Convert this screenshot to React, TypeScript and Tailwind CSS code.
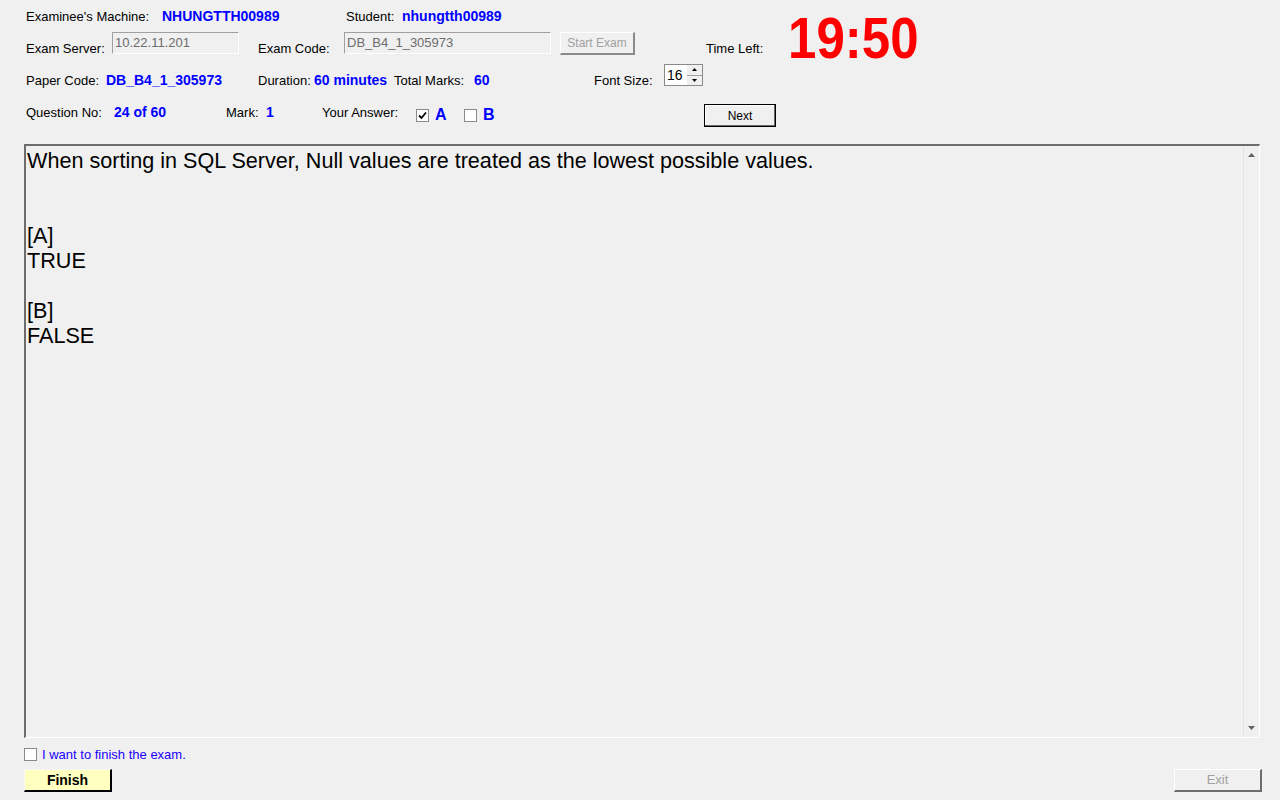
import React from "react";

function Label({ children, w }: { children: React.ReactNode; w?: string }) {
  return <div className={`text-[13px] leading-[15px] text-black whitespace-nowrap ${w ?? ""}`}>{children}</div>;
}

function Value({ children, w }: { children: React.ReactNode; w?: string }) {
  return (
    <div className={`text-[14px] leading-[16px] font-bold text-[#0000ff] whitespace-nowrap ${w ?? ""}`}>{children}</div>
  );
}

function CheckBox({ checked }: { checked?: boolean }) {
  return (
    <div className="w-[13px] h-[13px] border border-[#8a8a8a] bg-white flex items-center justify-center">
      {checked && (
        <svg width="9" height="9" viewBox="0 0 9 9">
          <path d="M1 4.5 L3.5 7 L8 1.5" stroke="#000" strokeWidth="1.8" fill="none" />
        </svg>
      )}
    </div>
  );
}

export default function App() {
  return (
    <div className="w-[1280px] h-[800px] bg-[#f0f0f0] overflow-hidden font-['Liberation_Sans',Arial,sans-serif]">
      {/* верх: строки 1-2 и таймер */}
      <div className="flex h-[64px]">
        <div className="w-[706px] shrink-0">
          <div className="h-[32px] flex items-center pl-[26px]">
            <Label w="w-[136px]">Examinee's Machine:</Label>
            <Value w="w-[184px]">NHUNGTTH00989</Value>
            <Label w="w-[56px]">Student:</Label>
            <Value>nhungtth00989</Value>
          </div>
          <div className="h-[32px] flex items-center pl-[26px]">
            <Label w="w-[86px]">Exam Server:</Label>
            <div className="self-start w-[127px] h-[22px] border-t border-l border-[#a0a0a0] border-b border-r border-b-white border-r-white bg-[#f0f0f0] text-[13px] leading-[20px] text-[#6d6d6d] pl-[2px]">
              10.22.11.201
            </div>
            <div className="w-[19px]" />
            <Label w="w-[86px]">Exam Code:</Label>
            <div className="self-start w-[207px] h-[22px] border-t border-l border-[#a0a0a0] border-b border-r border-b-white border-r-white bg-[#f0f0f0] text-[13px] leading-[20px] text-[#6d6d6d] pl-[2px]">
              DB_B4_1_305973
            </div>
            <div className="w-[9px]" />
            <div className="self-start w-[75px] h-[23px] border-t border-l border-white border-b-2 border-r-2 border-b-[#8a8a8a] border-r-[#8a8a8a] bg-[#f0f0f0] text-[12px] text-[#a0a0a0] flex items-center justify-center">
              Start Exam
            </div>
          </div>
        </div>
        <div className="mt-[41px] text-[13px] leading-[15px] w-[82px]">Time Left:</div>
        <div className="mt-[9px] h-[55px] text-[58px] leading-none font-bold text-[#ff0000] scale-x-[0.88] origin-left">19:50</div>
      </div>

      {/* строка 3 */}
      <div className="h-[32px] flex items-center pl-[26px]">
        <Label w="w-[80px]">Paper Code:</Label>
        <Value w="w-[152px]">DB_B4_1_305973</Value>
        <Label w="w-[56px]">Duration:</Label>
        <Value w="w-[80px]">60 minutes</Value>
        <Label w="w-[80px]">Total Marks:</Label>
        <Value w="w-[120px]">60</Value>
        <Label w="w-[70px]">Font Size:</Label>
        <div className="self-start w-[39px] h-[22px] border border-[#8a8a8a] bg-white flex">
          <div className="flex-1 text-[14px] leading-[20px] pl-[2px]">16</div>
          <div className="w-[15px] flex flex-col">
            <div className="flex-1 bg-[#f0f0f0] border-b border-[#a0a0a0] flex items-center justify-center">
              <svg width="5" height="3" viewBox="0 0 5 3">
                <path d="M0 3 L2.5 0 L5 3 Z" fill="#000" />
              </svg>
            </div>
            <div className="flex-1 bg-[#f0f0f0] flex items-center justify-center">
              <svg width="5" height="3" viewBox="0 0 5 3">
                <path d="M0 0 L2.5 3 L5 0 Z" fill="#000" />
              </svg>
            </div>
          </div>
        </div>
      </div>

      {/* строка 4 */}
      <div className="h-[32px] flex items-center pl-[26px]">
        <Label w="w-[88px]">Question No:</Label>
        <Value w="w-[112px]">24 of 60</Value>
        <Label w="w-[40px]">Mark:</Label>
        <Value w="w-[56px]">1</Value>
        <Label w="w-[94px]">Your Answer:</Label>
        <div className="flex items-center mt-[6px]">
          <CheckBox checked />
          <div className="ml-[6px] w-[29px] text-[16px] font-bold text-[#0000ff] leading-[18px]">A</div>
          <CheckBox />
          <div className="ml-[6px] w-[221px] text-[16px] font-bold text-[#0000ff] leading-[18px]">B</div>
        </div>
        <div className="self-start mt-[8px] w-[72px] h-[23px] border border-black bg-[#f0f0f0] shadow-[inset_-1px_-1px_0_#696969,inset_1px_1px_0_#ffffff] text-[12px] flex items-center justify-center">
          Next
        </div>
      </div>

      {/* текст вопроса */}
      <div className="mt-[16px] ml-[24px] w-[1236px] h-[594px] border-t-2 border-l-2 border-[#6d6d6d] border-b border-r border-b-white border-r-white flex">
        <div className="flex-1 pl-[1px] pt-[2px] text-[21.6px] leading-[25px] text-black">
          <div>When sorting in SQL Server, Null values are treated as the lowest possible values.</div>
          <div>&nbsp;</div>
          <div>&nbsp;</div>
          <div>[A]</div>
          <div>TRUE</div>
          <div>&nbsp;</div>
          <div>[B]</div>
          <div>FALSE</div>
        </div>
        <div className="w-[16px] border-l border-[#e3e3e3] bg-[#f0f0f0] flex flex-col justify-between items-center py-[7px]">
          <svg width="7" height="4" viewBox="0 0 7 4">
            <path d="M0 4 L3.5 0 L7 4 Z" fill="#606060" />
          </svg>
          <svg width="7" height="4" viewBox="0 0 7 4">
            <path d="M0 0 L3.5 4 L7 0 Z" fill="#606060" />
          </svg>
        </div>
      </div>

      {/* низ */}
      <div className="mt-[9px] ml-[24px] flex items-center">
        <CheckBox />
        <div className="ml-[5px] text-[13px] leading-[15px] text-[#1a00ff]">I want to finish the exam.</div>
      </div>
      <div className="mt-[7px] pl-[24px] pr-[18px] flex justify-between">
        <div className="w-[88px] h-[23px] bg-[#ffffc0] border-t border-l border-[#f8f8f8] border-b-2 border-r-2 border-b-black border-r-black text-[14px] font-bold flex items-center justify-center">
          Finish
        </div>
        <div className="w-[88px] h-[23px] bg-[#f0f0f0] border-t border-l border-white border-b-2 border-r-2 border-b-[#6d6d6d] border-r-[#6d6d6d] text-[13px] text-[#a0a0a0] flex items-center justify-center">
          Exit
        </div>
      </div>
    </div>
  );
}
